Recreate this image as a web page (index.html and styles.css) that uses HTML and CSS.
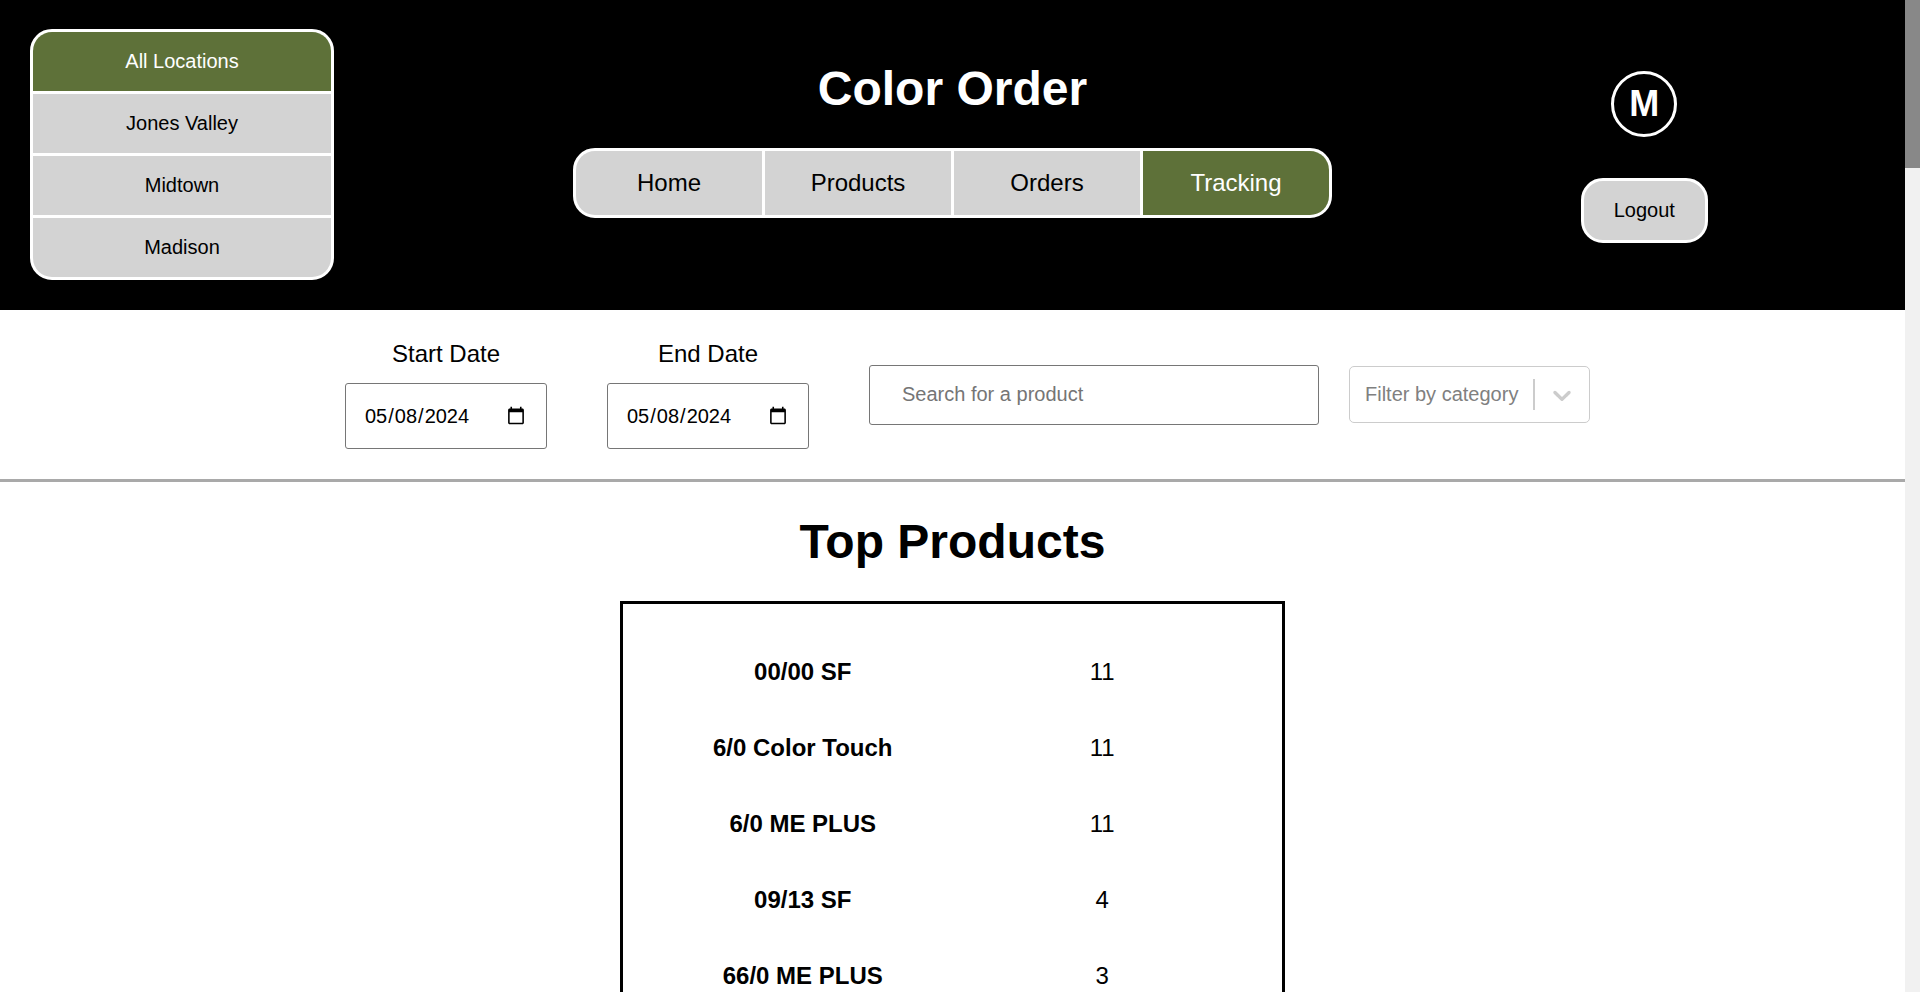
FILE: index.html
```html
<!DOCTYPE html>
<html lang="en-US">
<head>
<meta charset="utf-8">
<meta name="viewport" content="width=device-width, initial-scale=1">
<title>Color Order - Tracking</title>
<link rel="stylesheet" href="styles.css">
</head>
<body>
<div class="page">
  <header class="header">
    <div class="locations">
      <button type="button" class="location active">All Locations</button>
      <button type="button" class="location">Jones Valley</button>
      <button type="button" class="location">Midtown</button>
      <button type="button" class="location">Madison</button>
    </div>
    <div class="brand">
      <h1 class="title">Color Order</h1>
      <nav class="nav">
        <a class="nav-link" href="#home">Home</a>
        <a class="nav-link" href="#products">Products</a>
        <a class="nav-link" href="#orders">Orders</a>
        <a class="nav-link active" href="#tracking">Tracking</a>
      </nav>
    </div>
    <div class="account">
      <div class="avatar">M</div>
      <button type="button" class="logout">Logout</button>
    </div>
  </header>

  <form class="filters">
    <div class="dates">
      <div class="field">
        <label class="field-label" for="start">Start Date</label>
        <input class="date" type="date" id="start" value="2024-05-08">
      </div>
      <div class="field">
        <label class="field-label" for="end">End Date</label>
        <input class="date" type="date" id="end" value="2024-05-08">
      </div>
    </div>
    <input class="search" type="text" placeholder="Search for a product" aria-label="Search for a product">
    <div class="category">
      <select class="category-select" aria-label="Filter by category">
        <option>Filter by category</option>
      </select>
      <span class="separator"></span>
      <svg class="chevron" width="20" height="20" viewBox="0 0 20 20" aria-hidden="true"><path d="M4.516 7.548c0.436-0.446 1.043-0.481 1.576 0l3.908 3.747 3.908-3.747c0.533-0.481 1.141-0.446 1.574 0 0.436 0.445 0.408 1.197 0 1.615-0.406 0.418-4.695 4.502-4.695 4.502-0.217 0.223-0.502 0.335-0.787 0.335s-0.57-0.112-0.789-0.335c0 0-4.287-4.084-4.695-4.502s-0.436-1.17 0-1.615z"/></svg>
    </div>
  </form>

  <main class="top">
    <h2 class="title">Top Products</h2>
    <div class="panel">
      <table class="products">
        <tbody>
          <tr><th scope="row">00/00 SF</th><td>11</td></tr>
          <tr><th scope="row">6/0 Color Touch</th><td>11</td></tr>
          <tr><th scope="row">6/0 ME PLUS</th><td>11</td></tr>
          <tr><th scope="row">09/13 SF</th><td>4</td></tr>
          <tr><th scope="row">66/0 ME PLUS</th><td>3</td></tr>
        </tbody>
      </table>
    </div>
  </main>
</div>
<div class="scrollbar" aria-hidden="true"><div class="thumb"></div></div>
</body>
</html>
```
FILE: styles.css
```css
* {
  box-sizing: border-box;
}

body {
  display: flex;
  height: 100vh;
  margin: 0;
  overflow: hidden;
  background: #fff;
  color: #000;
  font-family: "Liberation Sans", Arial, sans-serif;
  font-size: 24px;
}

button,
input,
select {
  font-family: inherit;
  font-size: 20px;
}

.page {
  flex: 1;
  min-width: 0;
  overflow: hidden;
}

.scrollbar {
  width: 15px;
  background: #f1f1f1;
}

.thumb {
  height: 16.9%;
  background: #888;
}

.header {
  display: grid;
  grid-template-columns: 3fr 5fr 3fr;
  align-items: start;
  padding: 29px 0 30px;
  background: #000;
}

.locations {
  display: grid;
  gap: 3px;
  width: 304px;
  margin-left: 30px;
  overflow: hidden;
  border: 3px solid #fff;
  border-radius: 22px;
  background: #fff;
}

.location {
  padding: 18px 0;
  border: 0;
  background: #d3d3d3;
  color: #000;
  line-height: 23px;
}

.location.active,
.nav-link.active {
  background: #5e7139;
  color: #fff;
}

.title {
  margin: 0 0 32px;
  font-size: 48px;
  line-height: 55px;
  text-align: center;
}

.brand {
  padding-top: 32px;
  color: #fff;
}

.nav {
  display: grid;
  grid-template-columns: repeat(4, 1fr);
  gap: 3px;
  max-width: 759px;
  margin: 0 auto;
  overflow: hidden;
  border: 3px solid #fff;
  border-radius: 22px;
  background: #fff;
}

.nav-link {
  padding: 18px 0;
  background: #d3d3d3;
  color: #000;
  line-height: 28px;
  text-align: center;
  text-decoration: none;
}

.account {
  display: flex;
  flex-direction: column;
  align-items: center;
  gap: 41px;
  padding: 42px 2px 0 0;
}

.avatar {
  width: 66px;
  border: 3px solid #fff;
  border-radius: 50%;
  color: #fff;
  font-size: 36px;
  font-weight: bold;
  line-height: 60px;
  text-align: center;
}

.logout {
  padding: 18px 30px;
  border: 3px solid #fff;
  border-radius: 22px;
  background: #d3d3d3;
  color: #000;
  line-height: 23px;
}

.filters {
  display: flex;
  align-items: center;
  justify-content: center;
  gap: 30px;
  padding: 30px 0;
  border-bottom: 3px solid #a9a9a9;
}

.dates {
  display: flex;
  gap: 60px;
  margin: 0 30px;
}

.field {
  display: flex;
  flex-direction: column;
  align-items: center;
  gap: 16px;
}

.field-label {
  line-height: 27px;
}

.date {
  width: 202px;
  height: 66px;
  padding: 0 18px;
  border: 1px solid #767676;
  border-radius: 3px;
  background: #fff;
  color: #000;
}

.search {
  width: 450px;
  height: 60px;
  padding: 0 32px;
  border: 1px solid #767676;
  border-radius: 3px;
}

.search::placeholder {
  color: #757575;
}

.category {
  display: flex;
  align-items: center;
  width: 241px;
  height: 57px;
  border: 1px solid #ccc;
  border-radius: 5px;
}

.category-select {
  flex: 1;
  min-width: 0;
  height: 100%;
  padding: 0 0 2px 15px;
  appearance: none;
  border: 0;
  background: transparent;
  color: #808080;
}

.separator {
  width: 2px;
  height: 31px;
  background: #ccc;
}

.chevron {
  width: 30px;
  height: 30px;
  margin: 0 12px;
  fill: #ccc;
}

.top {
  padding: 32px 0;
}

.panel {
  width: 35%;
  max-width: 665px;
  margin: 0 auto;
  padding: 30px;
  border: 3px solid #000;
}

.products {
  width: 100%;
  border-collapse: collapse;
  table-layout: fixed;
}

.products th,
.products td {
  height: 76px;
  padding: 0;
  text-align: center;
}
```
